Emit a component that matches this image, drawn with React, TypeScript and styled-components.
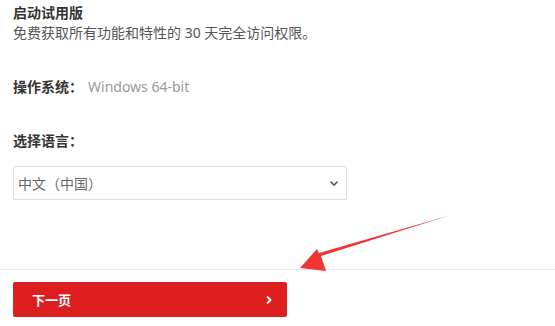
import React from "react";
import styled, { createGlobalStyle } from "styled-components";

const Global = createGlobalStyle`
  html, body { margin: 0; padding: 0; background: #fff; }
  body { font-family: "Noto Sans", "Noto Sans CJK SC", sans-serif; color: #333; }
`;

const Page = styled.div`
  position: relative;
  width: 555px;
  height: 326px;
  overflow: hidden;
`;

const Content = styled.div`
  padding: 4px 13px 0 13px;
  height: 269px;
  box-sizing: border-box;
`;

const Title = styled.div`
  font-size: 14px;
  font-weight: 700;
  line-height: 18px;
  color: #333;
`;

const Desc = styled.div`
  font-size: 14px;
  line-height: 18px;
  margin-top: 2px;
  color: #555;
`;

const Row = styled.div`
  display: flex;
  align-items: center;
  gap: 5px;
  margin-top: 36px;
  font-size: 14px;
  line-height: 18px;
`;

const Label = styled.span`
  font-weight: 700;
  color: #333;
`;

const Value = styled.span`
  color: #999;
`;

const LangLabel = styled.div`
  margin-top: 36px;
  font-size: 14px;
  line-height: 18px;
  font-weight: 700;
  color: #333;
`;

const SelectBox = styled.div`
  margin-top: 16px;
  width: 334px;
  height: 34px;
  box-sizing: border-box;
  border: 1px solid #ddd;
  border-radius: 2px;
  display: flex;
  align-items: center;
  justify-content: space-between;
  padding: 0 7px 0 4px;
  font-size: 14px;
  color: #666;
`;

const Footer = styled.div`
  border-top: 1px solid #e6e6e6;
  padding: 12px 13px 0 13px;
`;

const NextButton = styled.button`
  width: 274px;
  height: 35px;
  border: none;
  border-radius: 2px;
  background: #dc1e1e;
  color: #fff;
  display: flex;
  align-items: center;
  justify-content: space-between;
  padding: 0 14px 0 19px;
  font-family: "Noto Sans CJK SC", sans-serif;
  font-size: 13px;
  font-weight: 700;
  cursor: pointer;
`;

const ArrowSvg = styled.svg`
  position: absolute;
  left: 0;
  top: 0;
  pointer-events: none;
`;

export default function App() {
  return (
    <Page>
      <Global />
      <Content>
        <Title>启动试用版</Title>
        <Desc>免费获取所有功能和特性的 30 天完全访问权限。</Desc>
        <Row>
          <Label>操作系统：</Label>
          <Value>Windows 64-bit</Value>
        </Row>
        <LangLabel>选择语言：</LangLabel>
        <SelectBox>
          <span>中文（中国）</span>
          <svg width="10" height="8" viewBox="0 0 10 8">
            <path d="M1.5 2.5 L5 6 L8.5 2.5" fill="none" stroke="#555" strokeWidth="1.6" />
          </svg>
        </SelectBox>
      </Content>
      <Footer>
        <NextButton>
          <span>下一页</span>
          <svg width="8" height="10" viewBox="0 0 8 10">
            <path d="M2 1.5 L5.5 5 L2 8.5" fill="none" stroke="#fff" strokeWidth="2" />
          </svg>
        </NextButton>
      </Footer>
      <ArrowSvg width="555" height="326" viewBox="0 0 555 326">
        <path
          d="M451 215 L321 256 L326 271 L300 268 L317 249 L319 253 Z"
          fill="#f03535"
        />
      </ArrowSvg>
    </Page>
  );
}
